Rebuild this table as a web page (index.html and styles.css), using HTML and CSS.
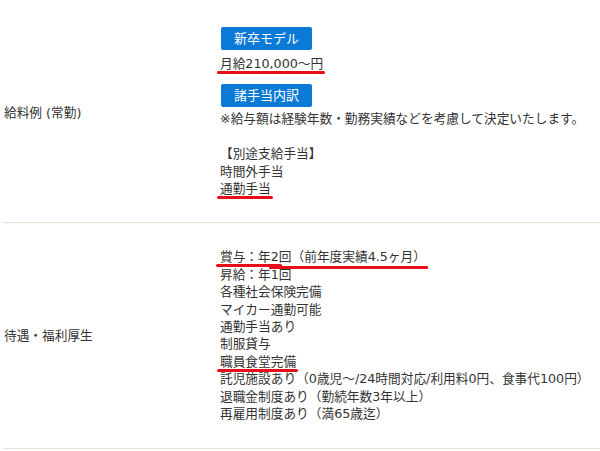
FILE: index.html
```html
<!DOCTYPE html>
<html lang="ja">
<head>
<meta charset="utf-8">
<link rel="stylesheet" href="styles.css">
</head>
<body>
<div class="table">
  <div class="row row-first">
    <div class="label">給料例 (常勤)</div>
    <div class="value">
      <div><span class="btn">新卒モデル</span></div>
      <p class="salary"><span class="mark">月給210,000〜円</span></p>
      <div class="btn-wrap"><span class="btn">諸手当内訳</span></div>
      <p class="note">※給与額は経験年数・勤務実績などを考慮して決定いたします。</p>
      <p class="blank">&nbsp;</p>
      <p>【別途支給手当】</p>
      <p>時間外手当</p>
      <p><span class="mark">通勤手当</span></p>
    </div>
  </div>
  <div class="row">
    <div class="label">待遇・福利厚生</div>
    <div class="value">
      <p><span class="mark mark-double">賞与：年2回（前年度実績4.5ヶ月）</span></p>
      <p>昇給：年1回</p>
      <p>各種社会保険完備</p>
      <p>マイカー通勤可能</p>
      <p>通勤手当あり</p>
      <p>制服貸与</p>
      <p><span class="mark">職員食堂完備</span></p>
      <p>託児施設あり（0歳児〜/24時間対応/利用料0円、食事代100円）</p>
      <p>退職金制度あり（勤続年数3年以上）</p>
      <p>再雇用制度あり（満65歳迄）</p>
    </div>
  </div>
</div>
</body>
</html>
```

FILE: styles.css
```css
html, body {
  margin: 0;
  padding: 0;
  background: #ffffff;
}
body {
  font-family: "DejaVu Sans", "Noto Sans CJK JP", sans-serif;
  font-size: 12.7px;
  line-height: 17.4px;
  color: #333333;
  overflow: hidden;
}
.table {
  margin-left: 3px;
}
.row {
  display: flex;
  align-items: center;
  padding: 25px 0 25px 0;
  border-bottom: 1px solid #e4e4d4;
}
.row-first {
  padding-top: 27px;
}
.label {
  width: 216px;
  flex: none;
  padding-left: 1px;
  box-sizing: border-box;
}
.value {
  flex: 1;
  padding-left: 1px;
}
.value p {
  margin: 0;
  white-space: nowrap;
}
.btn {
  display: inline-block;
  width: 91px;
  height: 23px;
  line-height: 23px;
  text-align: center;
  background: #0b7ad6;
  color: #ffffff;
  font-size: 13px;
  border-radius: 2px;
  margin-left: 1px;
  vertical-align: top;
}
.salary {
  margin-top: 5px !important;
}
.btn-wrap {
  margin-top: 12px;
}
.note {
  margin-top: 3px !important;
}
.mark {
  position: relative;
  display: inline-block;
}
.mark::after {
  content: "";
  position: absolute;
  left: -3px;
  right: -2px;
  bottom: -2px;
  height: 3px;
  border-radius: 2px;
  background: #e60f19;
}
.mark-double::after {
  left: -4px;
  right: 70%;
  bottom: -1px;
}
.mark-double::before {
  content: "";
  position: absolute;
  left: 24%;
  right: -2px;
  bottom: -2px;
  height: 2px;
  border-radius: 2px;
  background: #e60f19;
  box-shadow: 0 1px 0 #e60f19;
}
```
